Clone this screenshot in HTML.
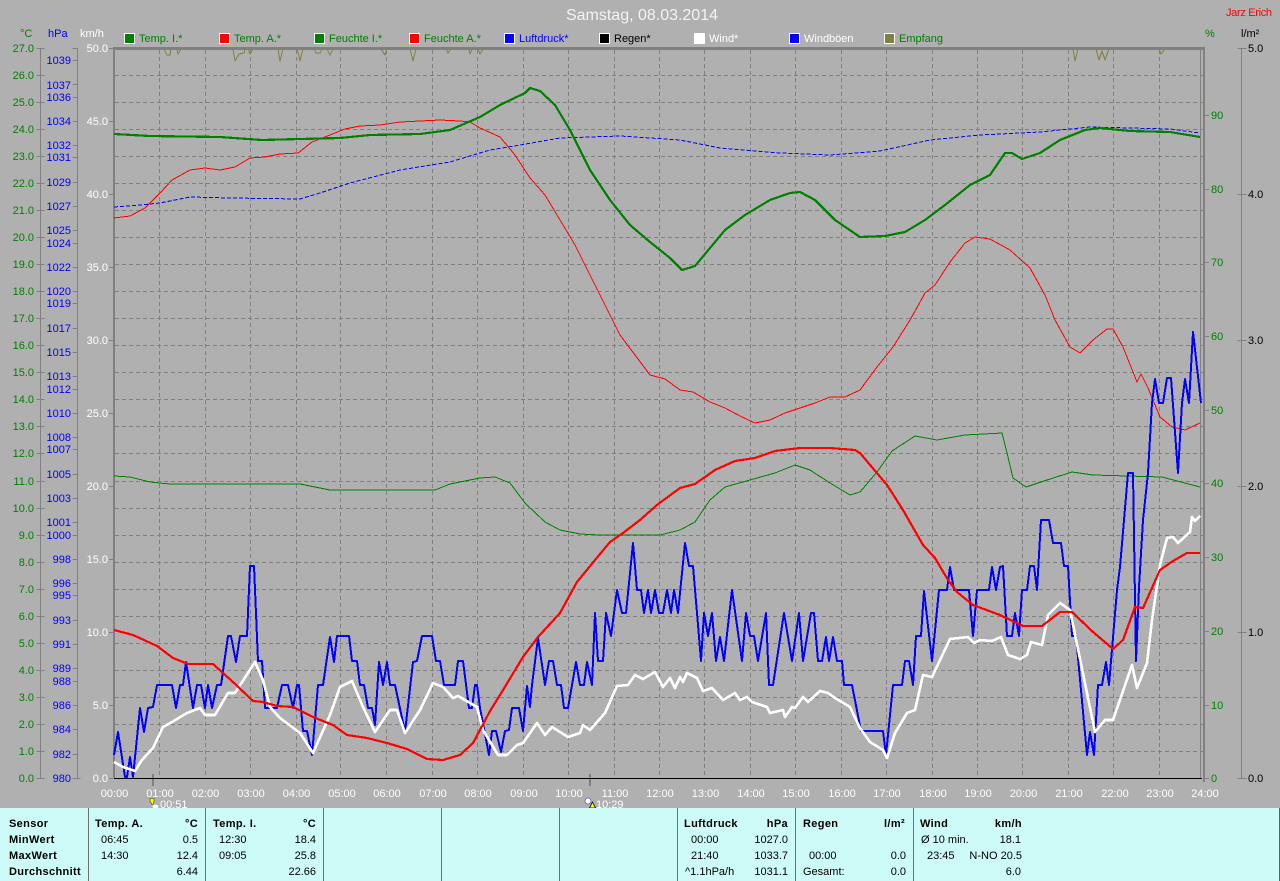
<!DOCTYPE html>
<html><head><meta charset="utf-8"><title>Samstag, 08.03.2014</title>
<style>
html,body{margin:0;padding:0;background:#b0b0b0;width:1280px;height:881px;overflow:hidden}
svg{display:block;font-family:"Liberation Sans",sans-serif;font-size:11px}
.g{fill:#008000}.b{fill:#0000ff}.w{fill:#fff}.k{fill:#000}.e{text-anchor:end}.m{text-anchor:middle}
.h{font-weight:bold;letter-spacing:.35px;fill:#000}
.l{fill:none;shape-rendering:crispEdges;stroke-linejoin:round}
</style></head><body>
<svg width="1280" height="881" viewBox="0 0 1280 881" xmlns="http://www.w3.org/2000/svg">
<rect width="1280" height="881" fill="#b0b0b0"/>
<text x="566" y="20" class="w" style="font-size:16px;fill:#f4f4f4" textLength="152">Samstag, 08.03.2014</text>
<text x="1226" y="16" style="fill:#ff0000" textLength="46">Jarz Erich</text>

<!-- grid -->
<path class="l" transform="translate(0,.5)" stroke="#808080" stroke-dasharray="4 3" d="M115 75H1204M115 102H1204M115 129H1204M115 156H1204M115 183H1204M115 210H1204M115 237H1204M115 264H1204M115 291H1204M115 318H1204M115 345H1204M115 372H1204M115 399H1204M115 426H1204M115 453H1204M115 481H1204M115 508H1204M115 535H1204M115 562H1204M115 589H1204M115 616H1204M115 643H1204M115 670H1204M115 697H1204M115 724H1204M115 751H1204"/>
<path class="l" stroke="#808080" stroke-dasharray="4 3" d="M159.5 50V778M205.5 50V778M250.500 50V778M296.500 50V778M340.500 50V778M386.500 50V778M432.500 50V778M477.500 50V778M523.500 50V778M568.500 50V778M614.500 50V778M659.500 50V778M704.500 50V778M750.500 50V778M795.500 50V778M841.500 50V778M886.500 50V778M932.500 50V778M977.500 50V778M1022.500 50V778M1068.500 50V778M1113.500 50V778M1159.500 50V778"/>
<!-- frame -->
<rect x="113" y="47" width="1092" height="3" fill="#808080"/>
<rect x="113" y="47" width="2" height="731" fill="#808080"/>
<rect x="1203" y="47" width="2" height="735" fill="#808080"/>
<rect x="1200" y="47" width="1" height="731" fill="#808080"/>
<rect x="152" y="774" width="2" height="12" fill="#808080"/>
<rect x="589" y="774" width="2" height="12" fill="#808080"/>

<!-- axes -->
<path class="l" transform="translate(.5,.5)" stroke="#808080" d="M40 48V778M36 48H44M36 75H44M36 102H44M36 129H44M36 156H44M36 183H44M36 210H44M36 237H44M36 264H44M36 291H44M36 318H44M36 345H44M36 372H44M36 399H44M36 426H44M36 453H44M36 481H44M36 508H44M36 535H44M36 562H44M36 589H44M36 616H44M36 643H44M36 670H44M36 697H44M36 724H44M36 751H44M36 778H44"/>
<path class="l" transform="translate(.5,.5)" stroke="#808080" d="M77 48V778M72 48H77M72 60H77M72 84H77M72 97H77M72 121H77M72 145H77M72 157H77M72 182H77M72 206H77M72 230H77M72 243H77M72 267H77M72 291H77M72 303H77M72 328H77M72 352H77M72 376H77M72 389H77M72 413H77M72 437H77M72 449H77M72 474H77M72 498H77M72 522H77M72 535H77M72 559H77M72 583H77M72 595H77M72 620H77M72 644H77M72 668H77M72 681H77M72 705H77M72 729H77M72 754H77M72 778H80"/>
<path class="l" transform="translate(0,.5)" stroke="#808080" d="M1205 115H1209M1205 189H1209M1205 262H1209M1205 336H1209M1205 410H1209M1205 483H1209M1205 557H1209M1205 631H1209M1205 705H1209M1205 778H1209"/>
<path class="l" transform="translate(.5,.5)" stroke="#808080" d="M1241 48V778M1237 48H1246M1237 194H1246M1237 340H1246M1237 486H1246M1237 632H1246M1237 778H1246"/>
<path class="l" transform="translate(0,.5)" stroke="#808080" d="M109 48H113M109 121H113M109 194H113M109 267H113M109 340H113M109 413H113M109 486H113M109 559H113M109 632H113M109 705H113M109 778H113"/>

<!-- Empfang -->
<g class="l" stroke="#808040">
<path d="M164 49L167 55L170 55L171 49M177 49L178 54L181 49M233 49L235 61L239 54L244 53L245 49M248 49L250 54L253 49M278 49L280 61L283 49M297 49L299 56L300 61L303 49M314 49L316 53L320 53L322 49M327 49L330 55L333 49M381 49L385 55L387 49M410 49L413 61L416 49M446 49L448 53L451 49M469 49L470 54L472 49M478 49L480 54L483 49M1073 49L1075 61L1078 49M1096 49L1099 60L1102 51L1105 60L1109 49M1159 49L1161 54L1165 49"/>
</g>

<!-- thin lines -->
<polyline class="l" stroke="#ff0000" points="114,218 130,216 145,208 160,193 172,180 190,170 205,168 220,170 235,167 250,158 265,157 280,154 298,153 312,142 330,135 345,129 360,126 380,125 400,122 420,121 440,120 460,121 470,122 480,128 500,137 515,155 530,178 545,195 560,220 575,245 590,275 605,305 620,335 635,355 650,375 665,379 680,390 693,392 710,402 725,408 740,416 755,423 770,420 785,413 800,408 815,403 830,397 845,397 860,390 877,367 893,347 910,320 925,293 935,285 950,262 965,243 975,237 990,239 1010,250 1030,268 1045,295 1055,320 1070,347 1080,353 1093,340 1107,329 1113,329 1123,347 1137,382 1141,374 1148,388 1160,417 1172,427 1185,430 1200,423"/>
<polyline class="l" stroke="#008000" points="114,476 130,477 150,482 170,484 300,484 330,490 435,490 450,484 480,478 495,477 510,483 525,503 545,522 560,530 580,534 600,535 660,535 680,530 695,522 710,500 725,487 750,480 775,473 795,465 810,470 830,483 850,495 860,492 877,472 892,451 915,436 937,440 965,435 1002,433 1007,453 1013,478 1026,487 1047,480 1072,472 1093,475 1162,477 1200,487"/>
<polyline class="l" stroke="#0000ff" stroke-dasharray="4 2" points="114,207 140,205 160,203 190,197 230,198 300,199 320,193 350,183 400,170 450,162 490,150 520,145 560,138 620,136 680,140 720,148 780,153 830,155 880,151 930,140 980,135 1040,132 1090,127 1130,128 1170,129 1200,133"/>
<!-- thick green -->
<polyline class="l" stroke="#008000" stroke-width="2.2" points="114,134 150,136 220,137 262,140 300,139 340,138 370,135 420,134 450,130 480,117 500,105 525,93 530,88 540,91 555,105 570,130 590,170 610,200 630,225 650,242 670,258 682,270 695,266 710,248 725,230 745,215 770,200 790,193 800,192 815,200 835,220 860,237 885,236 905,232 925,220 945,205 970,185 990,175 1005,153 1012,153 1022,159 1040,153 1060,140 1085,130 1100,128 1130,131 1170,132 1200,137"/>
<!-- gust -->
<polyline class="l" stroke="#0000ff" stroke-width="2" points="114,755 118,732 125,777 127,777 130,757 133,777 140,708 144,732 148,708 153,707 157,685 172,685 176,708 180,685 183,685 186,662 193,708 197,685 201,685 205,708 208,685 212,708 217,685 221,685 228,636 231,636 236,662 240,636 247,636 250,566 254,566 258,661 262,661 265,708 277,708 282,685 288,685 293,708 297,685 299,685 303,731 307,731 312,755 318,685 323,685 330,637 334,662 337,636 349,636 352,661 357,661 360,685 364,685 368,708 372,708 375,725 379,662 383,685 387,662 390,685 395,685 405,732 413,662 417,661 422,636 432,636 436,661 440,661 444,685 455,685 458,661 463,661 469,708 472,708 475,685 477,685 480,708 489,755 492,731 496,731 501,752 505,731 509,730 512,708 519,708 523,731 527,686 530,707 532,685 538,638 545,685 549,661 553,661 557,685 561,685 564,708 568,708 576,662 580,685 584,685 587,662 592,685 595,613 598,661 603,661 606,613 611,636 617,590 622,613 626,613 633,543 637,590 641,590 644,613 648,590 651,613 655,590 659,613 663,613 667,590 671,613 674,590 678,613 685,543 689,566 693,566 697,613 701,661 704,613 708,636 712,613 716,661 720,637 724,661 732,590 742,661 746,613 750,636 754,636 758,661 766,613 769,685 773,685 784,613 792,661 799,613 803,661 811,613 814,613 818,661 822,661 826,637 829,661 833,637 837,661 842,661 844,685 852,685 861,731 883,731 886,755 893,685 902,685 905,661 909,661 913,685 916,636 921,636 924,591 932,661 939,590 947,590 950,567 954,590 969,590 973,636 977,590 989,590 992,567 996,590 1000,567 1003,566 1007,636 1012,636 1015,613 1019,636 1022,590 1027,590 1030,566 1034,566 1037,590 1041,520 1049,520 1053,543 1061,543 1064,566 1068,566 1072,636 1076,636 1087,755 1090,732 1094,755 1098,685 1102,685 1106,662 1109,685 1117,590 1120,567 1128,473 1133,473 1136,661 1139,587 1143,520 1148,473 1152,403 1155,379 1159,403 1163,403 1167,378 1171,378 1178,473 1182,403 1185,379 1189,403 1193,332 1201,403"/>
<!-- wind -->
<polyline class="l" stroke="#ffffff" stroke-width="2.6" points="114,762 123,767 135,771 142,760 153,748 163,727 172,722 187,713 200,708 205,715 215,715 228,693 235,693 255,662 263,680 270,707 280,718 300,733 313,753 330,715 340,687 352,681 363,707 375,732 390,710 397,710 405,733 420,710 433,683 443,687 453,698 458,696 477,707 483,730 498,755 507,755 517,745 523,743 537,723 545,735 552,727 568,737 580,733 583,725 590,730 605,713 617,686 628,685 635,675 643,679 655,672 663,687 670,678 675,688 680,677 683,682 687,673 697,678 703,691 712,688 723,700 735,693 740,700 747,697 752,702 767,707 770,713 783,710 785,717 792,707 795,708 803,697 808,702 820,691 828,693 835,698 850,707 860,728 870,742 883,750 887,758 895,733 907,713 915,710 923,675 932,677 950,639 968,637 974,643 980,640 992,641 1001,637 1008,655 1020,659 1027,655 1031,642 1042,645 1048,615 1060,603 1070,610 1095,732 1105,720 1113,720 1132,665 1137,688 1147,663 1152,620 1160,565 1167,538 1173,537 1178,543 1190,532 1192,517 1195,521 1200,516"/>
<!-- thick red -->
<polyline class="l" stroke="#ff0000" stroke-width="2.2" points="114,630 133,635 157,646 173,658 188,664 213,664 233,682 253,701 263,702 277,706 293,707 313,717 333,725 347,735 367,738 387,743 407,749 427,759 443,760 460,755 473,743 480,730 490,711 500,695 523,657 538,637 560,613 577,582 595,560 610,542 623,533 640,520 657,505 680,488 695,484 715,470 735,461 755,458 775,451 800,448 830,448 855,450 860,453 887,485 903,510 923,545 935,558 948,580 957,592 973,605 1000,615 1023,626 1042,626 1060,612 1072,612 1093,632 1113,649 1123,640 1135,607 1143,608 1160,570 1173,561 1187,553 1200,553"/>
<rect x="114" y="778" width="1088" height="1" fill="#000"/>

<!-- headers -->
<text x="20" y="37" class="g">°C</text><text x="48" y="37" class="b">hPa</text><text x="80" y="37" class="w">km/h</text>
<text x="1205" y="37" class="g">%</text><text x="1241" y="37" class="k">l/m²</text>

<!-- legend -->
<g stroke="#fff" shape-rendering="crispEdges">
<rect x="124.5" y="33.5" width="10" height="10" fill="#008000"/><rect x="219.5" y="33.5" width="10" height="10" fill="#ff0000"/><rect x="314.5" y="33.5" width="10" height="10" fill="#008000"/><rect x="409.5" y="33.5" width="10" height="10" fill="#ff0000"/><rect x="504.5" y="33.5" width="10" height="10" fill="#0000ff"/><rect x="599.5" y="33.5" width="10" height="10" fill="#000"/><rect x="694.5" y="33.5" width="10" height="10" fill="#fff"/><rect x="789.5" y="33.5" width="10" height="10" fill="#0000ff"/><rect x="884.5" y="33.5" width="10" height="10" fill="#808040"/>
</g>
<text x="139" y="42" class="g">Temp. I.*</text><text x="234" y="42" class="g">Temp. A.*</text><text x="329" y="42" class="g">Feuchte I.*</text><text x="424" y="42" class="g">Feuchte A.*</text><text x="519" y="42" class="b">Luftdruck*</text><text x="614" y="42" class="k">Regen*</text><text x="709" y="42" class="w">Wind*</text><text x="804" y="42" class="w">Windböen</text><text x="899" y="42" class="g">Empfang</text>

<!-- temp labels -->
<g class="g e">
<text x="34" y="52">27.0</text><text x="34" y="79">26.0</text><text x="34" y="106">25.0</text><text x="34" y="133">24.0</text><text x="34" y="160">23.0</text><text x="34" y="187">22.0</text><text x="34" y="214">21.0</text><text x="34" y="241">20.0</text><text x="34" y="268">19.0</text><text x="34" y="295">18.0</text><text x="34" y="322">17.0</text><text x="34" y="349">16.0</text><text x="34" y="376">15.0</text><text x="34" y="403">14.0</text><text x="34" y="430">13.0</text><text x="34" y="457">12.0</text><text x="34" y="485">11.0</text><text x="34" y="512">10.0</text><text x="34" y="539">9.0</text><text x="34" y="566">8.0</text><text x="34" y="593">7.0</text><text x="34" y="620">6.0</text><text x="34" y="647">5.0</text><text x="34" y="674">4.0</text><text x="34" y="701">3.0</text><text x="34" y="728">2.0</text><text x="34" y="755">1.0</text><text x="34" y="782">0.0</text>
</g>
<!-- hPa labels -->
<g class="b e">
<text x="71" y="64">1039</text><text x="71" y="89">1037</text><text x="71" y="101">1036</text><text x="71" y="125">1034</text><text x="71" y="149">1032</text><text x="71" y="161">1031</text><text x="71" y="186">1029</text><text x="71" y="210">1027</text><text x="71" y="234">1025</text><text x="71" y="247">1024</text><text x="71" y="271">1022</text><text x="71" y="295">1020</text><text x="71" y="307">1019</text><text x="71" y="332">1017</text><text x="71" y="356">1015</text><text x="71" y="380">1013</text><text x="71" y="393">1012</text><text x="71" y="417">1010</text><text x="71" y="441">1008</text><text x="71" y="453">1007</text><text x="71" y="478">1005</text><text x="71" y="502">1003</text><text x="71" y="526">1001</text><text x="71" y="539">1000</text><text x="71" y="563">998</text><text x="71" y="587">996</text><text x="71" y="599">995</text><text x="71" y="624">993</text><text x="71" y="648">991</text><text x="71" y="672">989</text><text x="71" y="685">988</text><text x="71" y="709">986</text><text x="71" y="733">984</text><text x="71" y="758">982</text><text x="71" y="782">980</text>
</g>
<!-- km/h labels -->
<g class="w e">
<text x="108" y="52">50.0</text><text x="108" y="125">45.0</text><text x="108" y="198">40.0</text><text x="108" y="271">35.0</text><text x="108" y="344">30.0</text><text x="108" y="417">25.0</text><text x="108" y="490">20.0</text><text x="108" y="563">15.0</text><text x="108" y="636">10.0</text><text x="108" y="709">5.0</text><text x="108" y="782">0.0</text>
</g>
<!-- % labels -->
<g class="g">
<text x="1211" y="119">90</text><text x="1211" y="193">80</text><text x="1211" y="266">70</text><text x="1211" y="340">60</text><text x="1211" y="414">50</text><text x="1211" y="487">40</text><text x="1211" y="561">30</text><text x="1211" y="635">20</text><text x="1211" y="709">10</text><text x="1211" y="782">0</text>
</g>
<!-- rain labels -->
<g class="k">
<text x="1248" y="52">5.0</text><text x="1248" y="198">4.0</text><text x="1248" y="344">3.0</text><text x="1248" y="490">2.0</text><text x="1248" y="636">1.0</text><text x="1248" y="782">0.0</text>
</g>
<!-- time labels -->
<g class="w m">
<text x="114.5" y="797">00:00</text><text x="160" y="797">01:00</text><text x="205.5" y="797">02:00</text><text x="251" y="797">03:00</text><text x="296.5" y="797">04:00</text><text x="342" y="797">05:00</text><text x="387" y="797">06:00</text><text x="433" y="797">07:00</text><text x="478" y="797">08:00</text><text x="524" y="797">09:00</text><text x="569" y="797">10:00</text><text x="615" y="797">11:00</text><text x="660" y="797">12:00</text><text x="705.5" y="797">13:00</text><text x="751" y="797">14:00</text><text x="796" y="797">15:00</text><text x="842" y="797">16:00</text><text x="887" y="797">17:00</text><text x="933" y="797">18:00</text><text x="978" y="797">19:00</text><text x="1023.5" y="797">20:00</text><text x="1069" y="797">21:00</text><text x="1115" y="797">22:00</text><text x="1160" y="797">23:00</text><text x="1205" y="797">24:00</text>
</g>
<text x="160" y="808" class="w">00:51</text>
<text x="596" y="808" class="w">10:29</text>
<!-- markers -->
<path d="M150 798.5H154V802L153 804.5H152L150 801Z" fill="#ffff00" stroke="#404000" stroke-width=".6"/>
<ellipse cx="155.5" cy="806.5" rx="3" ry="2" fill="#fff"/>
<circle cx="588" cy="801" r="3" fill="#fff" stroke="#6060c0" stroke-width=".8"/>
<path d="M592.5 802L595.5 808H589.5Z" fill="#ffff00" stroke="#000" stroke-width=".8"/>

<!-- panel -->
<rect x="0" y="808" width="1279" height="73" fill="#ccfbf8"/>
<rect x="1279" y="808" width="1" height="73" fill="#606060"/>
<path class="l" stroke="#707070" d="M88.500 808V881M205.500 808V881M323.500 808V881M441.500 808V881M559.500 808V881M677.500 808V881M795.500 808V881M913.500 808V881"/>
<text x="9" y="827" class="h">Sensor</text><text x="9" y="843" class="h">MinWert</text><text x="9" y="859" class="h">MaxWert</text><text x="9" y="875" class="h">Durchschnitt</text>
<text x="95" y="827" class="h">Temp. A.</text><text x="198" y="827" class="h e">°C</text>
<text x="101" y="843" class="k">06:45</text><text x="198" y="843" class="k e">0.5</text>
<text x="101" y="859" class="k">14:30</text><text x="198" y="859" class="k e">12.4</text>
<text x="198" y="875" class="k e">6.44</text>
<text x="213" y="827" class="h">Temp. I.</text><text x="316" y="827" class="h e">°C</text>
<text x="219" y="843" class="k">12:30</text><text x="316" y="843" class="k e">18.4</text>
<text x="219" y="859" class="k">09:05</text><text x="316" y="859" class="k e">25.8</text>
<text x="316" y="875" class="k e">22.66</text>
<text x="684" y="827" class="h">Luftdruck</text><text x="788" y="827" class="h e">hPa</text>
<text x="691" y="843" class="k">00:00</text><text x="788" y="843" class="k e">1027.0</text>
<text x="691" y="859" class="k">21:40</text><text x="788" y="859" class="k e">1033.7</text>
<text x="685" y="875" class="k">^1.1hPa/h</text><text x="788" y="875" class="k e">1031.1</text>
<text x="803" y="827" class="h">Regen</text><text x="905" y="827" class="h e">l/m²</text>
<text x="809" y="859" class="k">00:00</text><text x="906" y="859" class="k e">0.0</text>
<text x="803" y="875" class="k">Gesamt:</text><text x="906" y="875" class="k e">0.0</text>
<text x="920" y="827" class="h">Wind</text><text x="1022" y="827" class="h e">km/h</text>
<text x="921" y="843" class="k">Ø 10 min.</text><text x="1021" y="843" class="k e">18.1</text>
<text x="927" y="859" class="k">23:45</text><text x="1022" y="859" class="k e">N-NO 20.5</text>
<text x="1021" y="875" class="k e">6.0</text>
</svg>
</body></html>
